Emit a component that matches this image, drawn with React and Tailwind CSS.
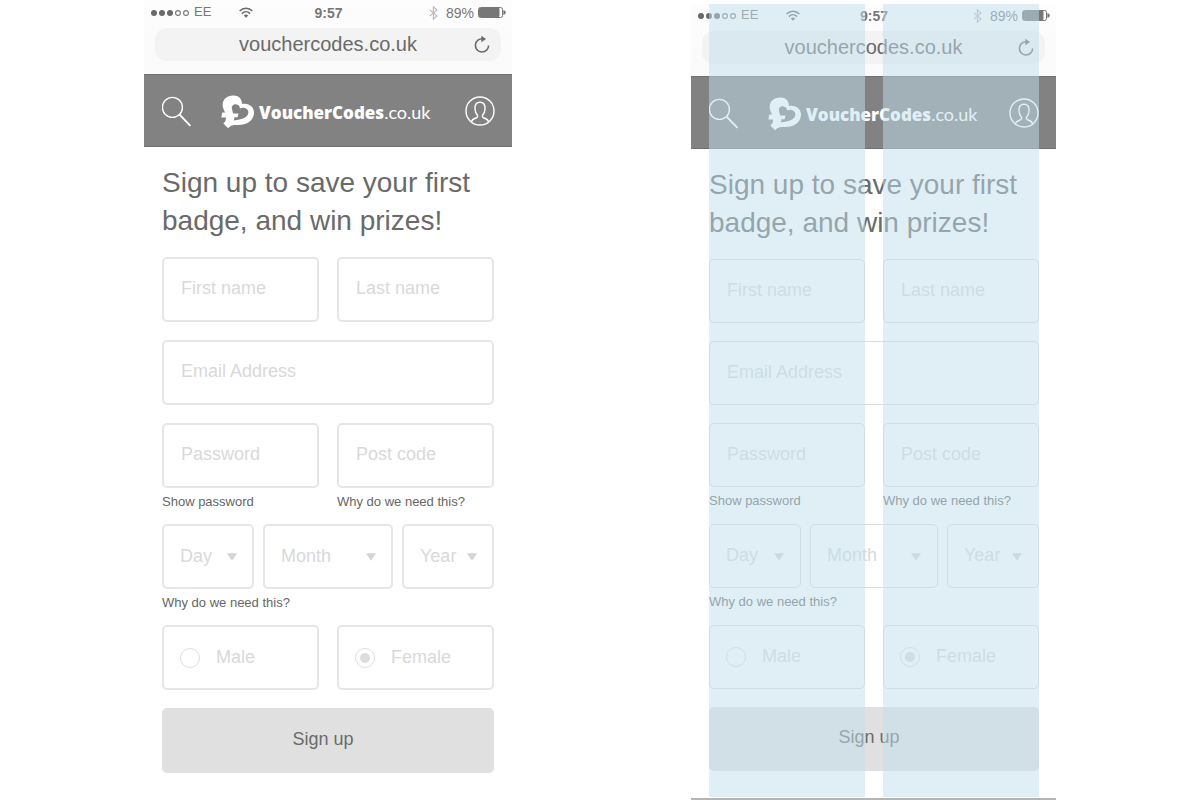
import React, { useId } from "react";

function SignalDots() {
  return (
    <svg width="38" height="8" viewBox="0 0 38 8" aria-hidden="true">
      {[3, 11, 19].map((x) => (
        <circle key={x} cx={x} cy="4" r="3" fill="#6a6a6a" />
      ))}
      {[27, 35].map((x) => (
        <circle key={x} cx={x} cy="4" r="2.4" fill="none" stroke="#777" strokeWidth="1.1" />
      ))}
    </svg>
  );
}

function WifiIcon() {
  return (
    <svg width="14" height="11" viewBox="0 0 14 11" fill="none" stroke="#6a6a6a" strokeWidth="1.5" aria-hidden="true">
      <path d="M0.6 4C4.3 0.2 9.7 0.2 13.4 4" />
      <path d="M2.9 6.6C5.3 4.2 8.7 4.2 11.1 6.6" />
      <path d="M4.8 8.4C6.1 7.2 7.9 7.2 9.2 8.4L7 10.8Z" fill="#6a6a6a" stroke="none" />
    </svg>
  );
}

function BluetoothIcon() {
  return (
    <svg width="9" height="14" viewBox="0 0 9 14" fill="none" stroke="#b8b8b8" strokeWidth="1.1" aria-hidden="true">
      <path d="M0.8 3.8L8 10L4.4 13.2V0.8L8 4L0.8 10.2" />
    </svg>
  );
}

function BatteryIcon() {
  return (
    <svg width="28" height="11" viewBox="0 0 28 11" aria-hidden="true">
      <rect x="0.5" y="0.5" width="24" height="10" rx="2" fill="#fff" stroke="#777" />
      <rect x="1" y="1" width="20.5" height="9" rx="1" fill="#777" />
      <path d="M25.4 3C28.6 4 28.6 7 25.4 8Z" fill="#777" />
    </svg>
  );
}

function ReloadIcon() {
  return (
    <svg width="16" height="18" viewBox="0 0 16 18" aria-hidden="true">
      <path d="M14.6 10.4A6.6 6.6 0 1 1 9 3.9" fill="none" stroke="#6a6a6a" strokeWidth="1.6" />
      <path d="M7.4 0.8L12 4L7.4 7.2Z" fill="#6a6a6a" />
    </svg>
  );
}

function SearchIcon() {
  return (
    <svg width="30" height="31" viewBox="0 0 30 31" fill="none" stroke="#fff" aria-hidden="true">
      <circle cx="10.4" cy="11.4" r="10" strokeWidth="1.4" />
      <path d="M17.6 18.6L28.4 29.8" strokeWidth="1.9" />
    </svg>
  );
}

function UserIcon() {
  return (
    <svg width="30" height="30" viewBox="0 0 30 30" fill="none" stroke="#fff" strokeWidth="1.4" aria-hidden="true">
      <circle cx="15" cy="15" r="14" />
      <path d="M6.4 25.8C7 23.2 9.2 22.6 11.4 21.8C12.6 21.3 12.9 20.4 12.4 19.2C10.6 17.2 10.2 15.4 10 13.2C9.6 8.6 11.4 6.2 15 6.2C18.6 6.2 20.4 8.6 20 13.2C19.8 15.4 19.4 17.2 17.6 19.2C17.1 20.4 17.4 21.3 18.6 21.8C20.8 22.6 23 23.2 23.6 25.8" />
    </svg>
  );
}

function LogoMark() {
  return (
    <svg width="34" height="34" viewBox="0 0 34 34" aria-hidden="true">
      <path
        fill="#fff"
        d="M2.5 14C-0.5 6 5 0.5 12 0.5C17.5 0.3 21 3.5 21 9C27.5 7.5 33 11.5 33 17.5C33 25.5 26 30 17 30C13 30 10 29.8 7.2 33.2L2.3 28.6C4.5 26.5 5.2 25 4.8 22.5H0.3L1.3 17.5H4C3.6 16.4 3 15.3 2.5 14Z"
      />
      <path
        fill="#828282"
        d="M11 14C10.2 10.8 12.7 9 15.5 9.4C18 9.8 19.2 11.4 18.8 13.6C21.8 11.6 27.2 12.8 27.4 17.3C27.4 22 21.2 25 12.6 25.4C13.6 24.2 13.5 23.2 13.2 22.2H16.6L17.6 18.6H12.2C11.7 17 11.3 15.6 11 14Z"
      />
    </svg>
  );
}

const fieldBox = "rounded-[5px] bg-white text-lg text-[#d9d9d9]";

function TextField({ label, type = "text", box }) {
  return (
    <input
      type={type}
      aria-label={label}
      placeholder={label}
      className={`block w-full min-w-0 px-[17px] pb-[2px] outline-none placeholder:text-[#d9d9d9] placeholder:opacity-100 ${fieldBox} ${box}`}
    />
  );
}

function SelectField({ label, box }) {
  return (
    <div className="relative">
      <select
        aria-label={label}
        className={`block w-full appearance-none pb-[2px] pl-4 outline-none ${fieldBox} ${box}`}
      >
        <option>{label}</option>
      </select>
      <svg
        className="pointer-events-none absolute right-[17px] top-[29px]"
        width="10"
        height="8"
        viewBox="0 0 10 8"
        aria-hidden="true"
      >
        <path d="M0 0.2H10L5 7.8Z" fill="#d4d4d4" />
      </svg>
    </div>
  );
}

function RadioField({ label, group, checked, box }) {
  return (
    <label className={`flex items-center gap-4 px-4 ${fieldBox} ${box}`}>
      <input
        type="radio"
        name={group}
        defaultChecked={checked}
        className="size-5 shrink-0 appearance-none rounded-full border border-[#dedede] p-1 before:block before:size-full before:rounded-full checked:before:bg-[#dcdcdc]"
      />
      <span className="pb-[2px]">{label}</span>
    </label>
  );
}

function HelpLink({ children }) {
  return (
    <a href="#help" className="block pt-[5px] text-[13px] leading-[18px] text-[#666]">
      {children}
    </a>
  );
}

function BrowserBar({ height }) {
  return (
    <div className={`bg-gradient-to-b from-[#fdfdfd] to-[#fafafa] ${height}`}>
      <div className="grid h-[25px] grid-cols-[1fr_auto_1fr] items-center pl-[7px] pr-[6px] text-sm text-[#777]">
        <div className="flex items-center">
          <SignalDots />
          <span className="ml-[5px] text-[13px]">EE</span>
          <span className="ml-7">
            <WifiIcon />
          </span>
        </div>
        <span className="font-bold">9:57</span>
        <div className="flex items-center justify-end">
          <BluetoothIcon />
          <span className="ml-2 mr-1">89%</span>
          <BatteryIcon />
        </div>
      </div>
      <div className="mx-[11px] mt-[3px] flex h-[33px] items-center rounded-xl bg-[#f3f3f3]">
        <input
          aria-label="Address"
          defaultValue="vouchercodes.co.uk"
          className="h-full min-w-0 flex-1 bg-transparent pl-[38px] text-center text-xl text-[#6a6a6a] outline-none"
        />
        <button type="button" aria-label="Reload" className="flex w-[38px] justify-center pb-[2px]">
          <ReloadIcon />
        </button>
      </div>
    </div>
  );
}

function SiteHeader() {
  return (
    <header className="flex h-[73px] items-center border-y border-[#707070] bg-[#828282] pl-[18px] pr-[17px]">
      <button type="button" aria-label="Search" className="pt-[2px]">
        <SearchIcon />
      </button>
      <a href="#home" className="ml-[29px] flex flex-1 items-center gap-1 whitespace-nowrap pt-[2px] text-white">
        <LogoMark />
        <span className="flex items-baseline leading-6">
          <b className="font-['Open_Sans',sans-serif] text-[17px] font-extrabold">VoucherCodes</b>
          <span className="font-['Lato',sans-serif] text-lg">.co.uk</span>
        </span>
      </a>
      <button type="button" aria-label="Account">
        <UserIcon />
      </button>
    </header>
  );
}

const sizes = {
  plain: {
    bar: "h-[74px]",
    padding: "px-[18px]",
    box: "h-[65px] border-2 border-[#e6e6e6]",
    button: "h-[65px]",
    help: "h-9",
  },
  guided: {
    bar: "h-[73px]",
    padding: "pl-[18px] pr-[17px]",
    box: "h-16 border border-[#dcdcdc]",
    button: "h-16",
    help: "h-[37px]",
  },
};

const pair = "grid grid-cols-2 gap-x-[18px]";

function SignUpScreen({ size }) {
  const group = useId();
  const s = sizes[size];
  return (
    <>
      <BrowserBar height={s.bar} />
      <SiteHeader />
      <form className={`pt-[17px] ${s.padding}`} onSubmit={(e) => e.preventDefault()}>
        <h1 className="mb-[17px] text-[28px] leading-[38px] text-[#6a6a6a]">
          Sign up to save your first badge, and win prizes!
        </h1>
        <div className={`mb-[18px] ${pair}`}>
          <TextField label="First name" box={s.box} />
          <TextField label="Last name" box={s.box} />
        </div>
        <div className="mb-[18px]">
          <TextField label="Email Address" type="email" box={s.box} />
        </div>
        <div className={pair}>
          <TextField label="Password" type="password" box={s.box} />
          <TextField label="Post code" box={s.box} />
        </div>
        <div className={`${pair} ${s.help}`}>
          <HelpLink>Show password</HelpLink>
          <HelpLink>Why do we need this?</HelpLink>
        </div>
        <div className="grid grid-cols-[92px_1fr_92px] gap-x-[9px]">
          <SelectField label="Day" box={s.box} />
          <SelectField label="Month" box={s.box} />
          <SelectField label="Year" box={s.box} />
        </div>
        <div className={s.help}>
          <HelpLink>Why do we need this?</HelpLink>
        </div>
        <div className={`mb-[18px] ${pair}`}>
          <RadioField label="Male" group={group} box={s.box} />
          <RadioField label="Female" group={group} box={s.box} checked />
        </div>
        <button
          type="submit"
          className={`block w-full rounded-[5px] bg-[#e0e0e0] pb-1 pr-[10px] text-lg text-[#6a6a6a] ${s.button}`}
        >
          Sign up
        </button>
      </form>
    </>
  );
}

export default function App() {
  return (
    <main className="flex items-start justify-between gap-6 bg-white px-[12%] font-['Liberation_Sans',Arial,sans-serif]">
      <section className="w-full max-w-[368px]">
        <SignUpScreen size="plain" />
      </section>
      <section className="relative mt-[3px] w-full max-w-[365px] border-b-2 border-[#b5b5b5] pb-[27px]">
        <SignUpScreen size="guided" />
        <div
          aria-hidden="true"
          className="pointer-events-none absolute inset-x-0 bottom-px top-px grid grid-cols-2 gap-x-[18px] pl-[18px] pr-[17px]"
        >
          <div className="bg-[#c2dfed]/50" />
          <div className="bg-[#c2dfed]/50" />
        </div>
      </section>
    </main>
  );
}
